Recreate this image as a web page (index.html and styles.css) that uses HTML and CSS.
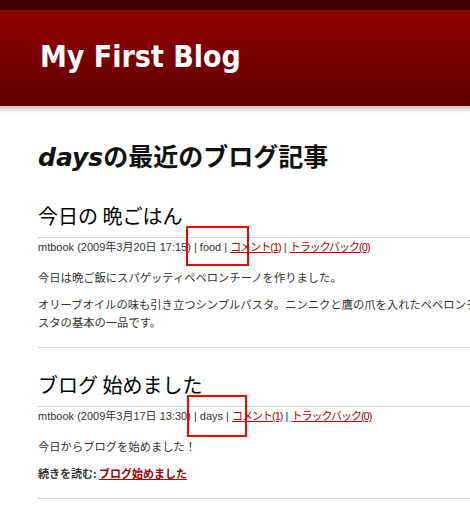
FILE: index.html
```html
<!DOCTYPE html>
<html lang="ja">
<head>
    <meta charset="UTF-8">
    <meta name="viewport" content="width=device-width, initial-scale=1.0">
    <title>My First Blog</title>
    <link rel="stylesheet" href="styles.css">
</head>
<body>
    <div class="topbar"></div>
    <div class="header">
        <h1 class="blog-title">My First Blog</h1>
    </div>
    <div class="header-shadow"></div>

    <div class="content">
        <h2 class="archive-title"><em>days</em>の最近のブログ記事</h2>

        <div class="entry">
            <h3 class="entry-title">今日の 晩ごはん</h3>
            <div class="entry-meta">
                mtbook (2009年3月20日 17:15) | food | <a href="#">コメント(1)</a> | <a href="#">トラックバック(0)</a>
            </div>
            <div class="entry-body">
                <p>今日は晩ご飯にスパゲッティペペロンチーノを作りました。</p>
                <p>オリーブオイルの味も引き立つシンプルパスタ。ニンニクと鷹の爪を入れたペペロンチーノはパスタの基本の一品です。</p>
            </div>
        </div>

        <div class="entry">
            <h3 class="entry-title">ブログ 始めました</h3>
            <div class="entry-meta">
                mtbook (2009年3月17日 13:30) | days | <a href="#">コメント(1)</a> | <a href="#">トラックバック(0)</a>
            </div>
            <div class="entry-body">
                <p>今日からブログを始めました！</p>
                <p class="more">続きを読む: <a href="#">ブログ始めました</a></p>
            </div>
        </div>
    </div>

    <!-- highlight boxes drawn over the category links -->
    <div class="mark mark-one"></div>
    <div class="mark mark-two"></div>
</body>
</html>
```

FILE: styles.css
```css
body {
    margin: 0;
    background: #fff;
    color: #333;
    font-family: "Liberation Sans", "Noto Sans CJK JP", sans-serif;
    overflow: hidden;
    position: relative;
}
.topbar {
    height: 10px;
    background-color: #3f0000;
}
.header {
    height: 96px;
    padding-left: 40px;
    background: linear-gradient(#930000, #5e0000);
    display: flex;
    align-items: center;
}
.blog-title {
    margin: 0;
    color: #fff;
    font-family: "DejaVu Sans Condensed", "DejaVu Sans", sans-serif;
    font-stretch: condensed;
    font-size: 30px;
    font-weight: bold;
    padding-bottom: 4px;
}
.header-shadow {
    height: 7px;
    background: linear-gradient(#c8c4c8, #fff);
}
.content {
    width: 490px;
    padding-left: 38px;
}
.archive-title {
    margin: 24px 0 0;
    font-family: "DejaVu Sans", "Noto Sans CJK JP", sans-serif;
    font-size: 25px;
    font-weight: bold;
    color: #111;
}
.archive-title em {
    font-style: italic;
}
.entry {
    border-bottom: 1px solid #d4d4d4;
    padding-bottom: 7px;
}
.entry-title {
    margin: 0;
    padding: 28px 0 7px;
    font-family: "Noto Sans CJK JP", sans-serif;
    font-size: 20px;
    font-weight: normal;
    color: #000;
}
.entry + .entry .entry-title {
    padding-top: 22px;
}
.entry-meta {
    border-top: 1px solid #d4d4d4;
    padding-top: 1px;
    font-size: 11px;
    line-height: 16px;
    color: #333;
}
.entry-meta a {
    color: #b00000;
    letter-spacing: -1px;
}
.entry-body {
    font-family: "Noto Sans CJK JP", sans-serif;
    font-size: 11.3px;
    line-height: 18px;
    color: #333;
    padding-top: 13px;
}
.entry-body p {
    margin: 0 0 9px;
}
.more {
    font-weight: bold;
    font-size: 11px;
}
.more a {
    color: #a00000;
}
.mark {
    position: absolute;
    border: 2px solid #ff0000;
}
.mark-one {
    left: 186px;
    top: 226px;
    width: 59px;
    height: 36px;
}
.mark-two {
    left: 187px;
    top: 395px;
    width: 56px;
    height: 38px;
}
```
